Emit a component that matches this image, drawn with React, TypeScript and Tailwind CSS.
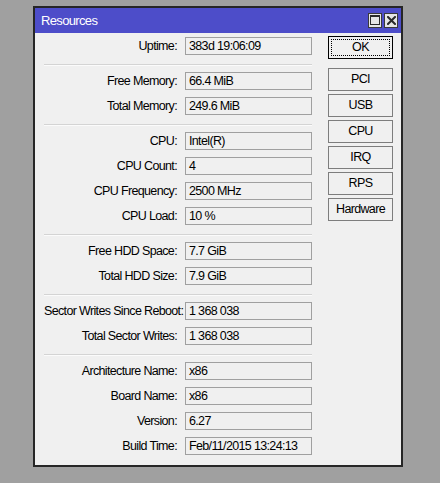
import React from 'react';

type Row = { label: string; value: string };

const sections: Row[][] = [
  [{ label: 'Uptime:', value: '383d 19:06:09' }],
  [
    { label: 'Free Memory:', value: '66.4 MiB' },
    { label: 'Total Memory:', value: '249.6 MiB' },
  ],
  [
    { label: 'CPU:', value: 'Intel(R)' },
    { label: 'CPU Count:', value: '4' },
    { label: 'CPU Frequency:', value: '2500 MHz' },
    { label: 'CPU Load:', value: '10 %' },
  ],
  [
    { label: 'Free HDD Space:', value: '7.7 GiB' },
    { label: 'Total HDD Size:', value: '7.9 GiB' },
  ],
  [
    { label: 'Sector Writes Since Reboot:', value: '1 368 038' },
    { label: 'Total Sector Writes:', value: '1 368 038' },
  ],
  [
    { label: 'Architecture Name:', value: 'x86' },
    { label: 'Board Name:', value: 'x86' },
    { label: 'Version:', value: '6.27' },
    { label: 'Build Time:', value: 'Feb/11/2015 13:24:13' },
  ],
];

const buttons = ['PCI', 'USB', 'CPU', 'IRQ', 'RPS', 'Hardware'];

// One label + read-only field line
function Field({ label, value }: Row) {
  return (
    <div className="flex items-center h-[18px]">
      <div className="w-[133px] text-right whitespace-nowrap">{label}</div>
      <div className="ml-[8px] w-[127px] h-[18px] border border-[#a0a0a0] bg-[#f0f0f0] pl-[3px] flex items-center whitespace-nowrap overflow-hidden">
        {value}
      </div>
    </div>
  );
}

function Divider() {
  return <div className="mt-[9px] mb-[6px] border-t border-b border-t-[#d4d4d4] border-b-[#fbfbfb]" />;
}

function TitleButton({ kind }: { kind: 'max' | 'close' }) {
  return (
    <div className="w-[14px] h-[15px] bg-[#e6e6e6] border border-[#3a3a3a] flex items-center justify-center">
      {kind === 'max' ? (
        <svg width="10" height="10" viewBox="0 0 10 10">
          <rect x="0.5" y="0.5" width="9" height="9" fill="none" stroke="#2a2a2a" strokeWidth="1" />
          <rect x="0" y="0" width="10" height="2" fill="#2a2a2a" />
        </svg>
      ) : (
        <svg width="9" height="9" viewBox="0 0 9 9">
          <path d="M1 1 L8 8 M8 1 L1 8" stroke="#2a2a2a" strokeWidth="2" strokeLinecap="square" />
        </svg>
      )}
    </div>
  );
}

export default function App() {
  return (
    <div
      className="w-[440px] h-[483px] bg-[#a0a0a0] pt-[6px] pl-[33px] overflow-hidden text-[12.5px] tracking-[-0.65px] text-black"
      style={{ fontFamily: '"Liberation Sans", Arial, sans-serif' }}
    >
      <div className="w-[370px] h-[461px] border-2 border-[#262626] bg-[#f0f0f0] flex flex-col">
        {/* Title bar */}
        <div className="h-[25px] bg-[#4d4dc9] flex items-center pl-[6px] pr-[3px] pt-px">
          <span className="text-white text-[13px] flex-1">Resources</span>
          <div className="flex gap-[2px] -mt-[2px]">
            <TitleButton kind="max" />
            <TitleButton kind="close" />
          </div>
        </div>

        {/* Body */}
        <div className="flex flex-1">
          <div className="pl-[9px] pt-[4px] w-[277px] flex flex-col">
            {sections.map((rows, i) => (
              <React.Fragment key={i}>
                {i > 0 && <Divider />}
                <div className="flex flex-col gap-[7px]">
                  {rows.map((r) => (
                    <Field key={r.label} {...r} />
                  ))}
                </div>
              </React.Fragment>
            ))}
          </div>

          <div className="ml-[16px] pt-[3px] flex flex-col">
            <button className="w-[65px] h-[23px] border border-black bg-[#f0f0f0] p-[2px]">
              <div className="w-full h-full border border-dotted border-black flex items-center justify-center">
                OK
              </div>
            </button>
            <div className="mt-[9px] flex flex-col gap-[3px]">
              {buttons.map((b) => (
                <button
                  key={b}
                  className="w-[65px] h-[23px] border border-[#7d7d7d] bg-[#f0f0f0] flex items-center justify-center"
                >
                  {b}
                </button>
              ))}
            </div>
          </div>
        </div>
      </div>
    </div>
  );
}
